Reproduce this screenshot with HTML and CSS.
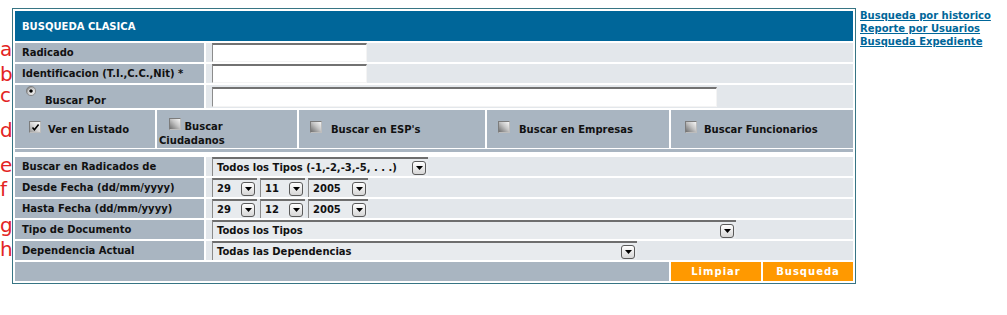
FILE: index.html
```html
<!DOCTYPE html>
<html lang="es">
<head>
<meta charset="utf-8">
<title>Busqueda Clasica</title>
<link rel="stylesheet" href="styles.css">
</head>
<body>
<div class="page">
  <div class="marks">
    <div class="mark m-a">a</div>
    <div class="mark m-b">b</div>
    <div class="mark m-c">c</div>
    <div class="mark m-d">d</div>
    <div class="mark m-e">e</div>
    <div class="mark m-f">f</div>
    <div class="mark m-g">g</div>
    <div class="mark m-h">h</div>
  </div>

  <form class="box">
    <div class="hdr">BUSQUEDA CLASICA</div>

    <div class="row">
      <div class="lbl">Radicado</div>
      <div class="val"><input type="text" class="txt w-short"></div>
    </div>
    <div class="row">
      <div class="lbl">Identificacion (T.I.,C.C.,Nit) *</div>
      <div class="val"><input type="text" class="txt w-short"></div>
    </div>
    <div class="row tall">
      <div class="lbl lbl-radio">
        <svg class="radio" width="10" height="10" viewBox="0 0 10 10">
          <defs>
            <linearGradient id="rg" x1="0" y1="0" x2="1" y2="1">
              <stop offset="0" stop-color="#6e6e6e"/>
              <stop offset="0.55" stop-color="#cfcfcf"/>
              <stop offset="1" stop-color="#f4f4f4"/>
            </linearGradient>
          </defs>
          <circle cx="5" cy="5" r="4.6" fill="url(#rg)" stroke="#7a7a7a" stroke-width="0.8"/>
          <circle cx="5" cy="5" r="2.6" fill="#f2f2f2"/>
          <circle cx="5" cy="5" r="1.8" fill="#000"/>
        </svg>
        <span class="radio-t">Buscar Por</span>
      </div>
      <div class="val"><input type="text" class="txt w-long"></div>
    </div>

    <div class="opts">
      <div class="opt-grid">
        <div class="opt o1">
          <span class="cb on">
            <svg width="11" height="11" viewBox="0 0 11 11"><path d="M2.5 5.6 L4.4 7.8 L8.6 2.6" fill="none" stroke="#000" stroke-width="1.6"/></svg>
          </span>
          <span>Ver en Listado</span>
        </div>
        <div class="opt o2"><span class="cb"></span> Buscar<br>Ciudadanos</div>
        <div class="opt o3"><span class="cb"></span><span>Buscar en ESP's</span></div>
        <div class="opt o4"><span class="cb"></span><span>Buscar en Empresas</span></div>
        <div class="opt o5"><span class="cb"></span><span>Buscar Funcionarios</span></div>
      </div>
      <div class="sep"></div>
    </div>

    <div class="row">
      <div class="lbl">Buscar en Radicados de</div>
      <div class="val">
        <span class="sel w-rad"><span>Todos los Tipos (-1,-2,-3,-5, . . .)</span><span class="sel-b"><svg width="7" height="4" viewBox="0 0 7 4"><polygon points="0,0 7,0 3.5,4" fill="#000"/></svg></span></span>
      </div>
    </div>
    <div class="row">
      <div class="lbl">Desde Fecha (dd/mm/yyyy)</div>
      <div class="val dates">
        <span class="sel w-d"><span>29</span><span class="sel-b"><svg width="7" height="4" viewBox="0 0 7 4"><polygon points="0,0 7,0 3.5,4" fill="#000"/></svg></span></span>
        <span class="sel w-d"><span>11</span><span class="sel-b"><svg width="7" height="4" viewBox="0 0 7 4"><polygon points="0,0 7,0 3.5,4" fill="#000"/></svg></span></span>
        <span class="sel w-y"><span>2005</span><span class="sel-b"><svg width="7" height="4" viewBox="0 0 7 4"><polygon points="0,0 7,0 3.5,4" fill="#000"/></svg></span></span>
      </div>
    </div>
    <div class="row">
      <div class="lbl">Hasta Fecha (dd/mm/yyyy)</div>
      <div class="val dates">
        <span class="sel w-d"><span>29</span><span class="sel-b"><svg width="7" height="4" viewBox="0 0 7 4"><polygon points="0,0 7,0 3.5,4" fill="#000"/></svg></span></span>
        <span class="sel w-d"><span>12</span><span class="sel-b"><svg width="7" height="4" viewBox="0 0 7 4"><polygon points="0,0 7,0 3.5,4" fill="#000"/></svg></span></span>
        <span class="sel w-y"><span>2005</span><span class="sel-b"><svg width="7" height="4" viewBox="0 0 7 4"><polygon points="0,0 7,0 3.5,4" fill="#000"/></svg></span></span>
      </div>
    </div>
    <div class="row">
      <div class="lbl">Tipo de Documento</div>
      <div class="val">
        <span class="sel w-tipo"><span>Todos los Tipos</span><span class="sel-b"><svg width="7" height="4" viewBox="0 0 7 4"><polygon points="0,0 7,0 3.5,4" fill="#000"/></svg></span></span>
      </div>
    </div>
    <div class="row">
      <div class="lbl">Dependencia Actual</div>
      <div class="val">
        <span class="sel w-dep"><span>Todas las Dependencias</span><span class="sel-b"><svg width="7" height="4" viewBox="0 0 7 4"><polygon points="0,0 7,0 3.5,4" fill="#000"/></svg></span></span>
      </div>
    </div>

    <div class="acts">
      <div class="fill"></div>
      <button type="button" class="btn">Limpiar</button>
      <button type="button" class="btn">Busqueda</button>
    </div>
  </form>

  <div class="links">
    <a href="#">Busqueda por historico</a>
    <a href="#">Reporte por Usuarios</a>
    <a href="#">Busqueda Expediente</a>
  </div>
</div>
</body>
</html>
```

FILE: styles.css
```css
body {
  margin: 0;
  background: #ffffff;
  font-family: "DejaVu Sans", Verdana, sans-serif;
  font-size: 10px;
  color: #111111;
}

.page {
  display: flex;
  align-items: flex-start;
  padding-top: 8px;
}

/* annotation letters */
.marks {
  width: 12px;
  flex: none;
  display: flex;
  flex-direction: column;
  color: #e32424;
  font-family: "DejaVu Sans", sans-serif;
  font-size: 20px;
  line-height: 20px;
}
.mark { height: 20px; }
.m-a { margin-top: 31px; }
.m-b { margin-top: 5px; }
.m-c { margin-top: 1px; }
.m-d { margin-top: 15px; }
.m-e { margin-top: 15px; }
.m-f { margin-top: 4px; }
.m-g { margin-top: 16px; }
.m-h { margin-top: 4px; }

/* main box */
.box {
  flex: none;
  width: 838px;
  margin: 0;
  padding: 2px;
  border: 1px solid #377584;
  background: #ffffff;
  display: flex;
  flex-direction: column;
  gap: 2px;
}

.hdr {
  height: 30px;
  background: #006699;
  color: #ffffff;
  font-weight: bold;
  padding-left: 7px;
  display: flex;
  align-items: center;
}

.row {
  display: grid;
  grid-template-columns: 189px 1fr;
  gap: 2px;
  height: 19px;
}
.row.tall { height: 23px; }

.lbl {
  background: #a9b5c1;
  font-weight: bold;
  padding-left: 7px;
  display: flex;
  align-items: center;
  white-space: nowrap;
}

.lbl-radio {
  align-items: flex-start;
  padding-left: 11px;
}
.radio {
  margin-top: 1px;
  flex: none;
}
.radio-t {
  margin-left: 9px;
  margin-top: 10px;
  line-height: 12px;
}

.val {
  background: #e3e7eb;
  padding-left: 6px;
  display: flex;
  align-items: center;
}
.val.dates { gap: 3px; }

.txt {
  box-sizing: border-box;
  height: 19px;
  margin: 0;
  padding: 0 3px;
  border: 0;
  border-top: 2px solid #727272;
  border-left: 1px solid #8c8c8c;
  border-right: 1px solid #f4f4f4;
  border-bottom: 1px solid #f4f4f4;
  background: #ffffff;
  font: inherit;
}
.w-short { width: 155px; }
.w-long { width: 505px; height: 20px; }

/* options row */
.opts {
  height: 45px;
  display: flex;
  flex-direction: column;
}
.opt-grid {
  height: 37px;
  display: grid;
  grid-template-columns: 140px 140px 186px 182px 1fr;
  gap: 2px;
}
.opt {
  background: #a9b5c1;
  font-weight: bold;
  display: flex;
  align-items: center;
  white-space: nowrap;
}
.o1 { padding-left: 14px; }
.o3, .o4 { padding-left: 11px; }
.o5 { padding-left: 14px; }
.opt .cb { margin: 0 7px 5px 0; }
.o3 .cb, .o4 .cb { margin-right: 9px; }
.o2 {
  display: block;
  padding: 8px 0 0 2px;
  line-height: 14px;
}
.o2 .cb { margin: 0 0 0 10px; }

.cb {
  display: inline-block;
  box-sizing: border-box;
  width: 12px;
  height: 12px;
  flex: none;
  border-top: 1px solid #7c7c7c;
  border-left: 1px solid #7c7c7c;
  border-right: 1px solid #bdbdbd;
  border-bottom: 1px solid #bdbdbd;
  background: linear-gradient(to bottom left, #f6f6f6 0%, #c4c4c4 45%, #6f6f6f 100%);
}
.cb.on {
  background: linear-gradient(to bottom left, #fafafa 0%, #dadada 50%, #9a9a9a 100%);
}
.cb.on svg {
  display: block;
  margin: 0;
}

.sep {
  height: 3px;
  margin-top: 2px;
  background: #a9b5c1;
}

/* select look-alikes */
.sel {
  box-sizing: border-box;
  height: 19px;
  display: flex;
  align-items: center;
  justify-content: space-between;
  padding: 0 2px 0 4px;
  border-top: 2px solid #6e6e6e;
  border-left: 1px solid #8a8a8a;
  background: #e8ebee;
  font-weight: bold;
  white-space: nowrap;
  flex: none;
}
.sel-b {
  box-sizing: border-box;
  width: 14px;
  height: 14px;
  border: 1px solid #5a5a5a;
  border-radius: 3px;
  background: linear-gradient(#ffffff, #d6d6d6);
  display: flex;
  align-items: center;
  justify-content: center;
  flex: none;
}
.w-rad { width: 216px; }
.w-d { width: 45px; }
.w-y { width: 60px; }
.w-tipo { width: 524px; }
.w-dep { width: 425px; }

/* buttons */
.acts {
  display: grid;
  grid-template-columns: 1fr 90px 90px;
  gap: 2px;
  height: 19px;
}
.fill { background: #a9b5c1; }
.btn {
  margin: 0;
  padding: 0;
  border: 0;
  height: 19px;
  background: #ff9900;
  color: #ffffff;
  font: inherit;
  font-weight: bold;
  letter-spacing: 1px;
}

/* side links */
.links {
  margin-left: 4px;
  padding-top: 1px;
  display: flex;
  flex-direction: column;
  line-height: 13px;
}
.links a {
  color: #006699;
  font-weight: bold;
  text-decoration: underline;
}
```
